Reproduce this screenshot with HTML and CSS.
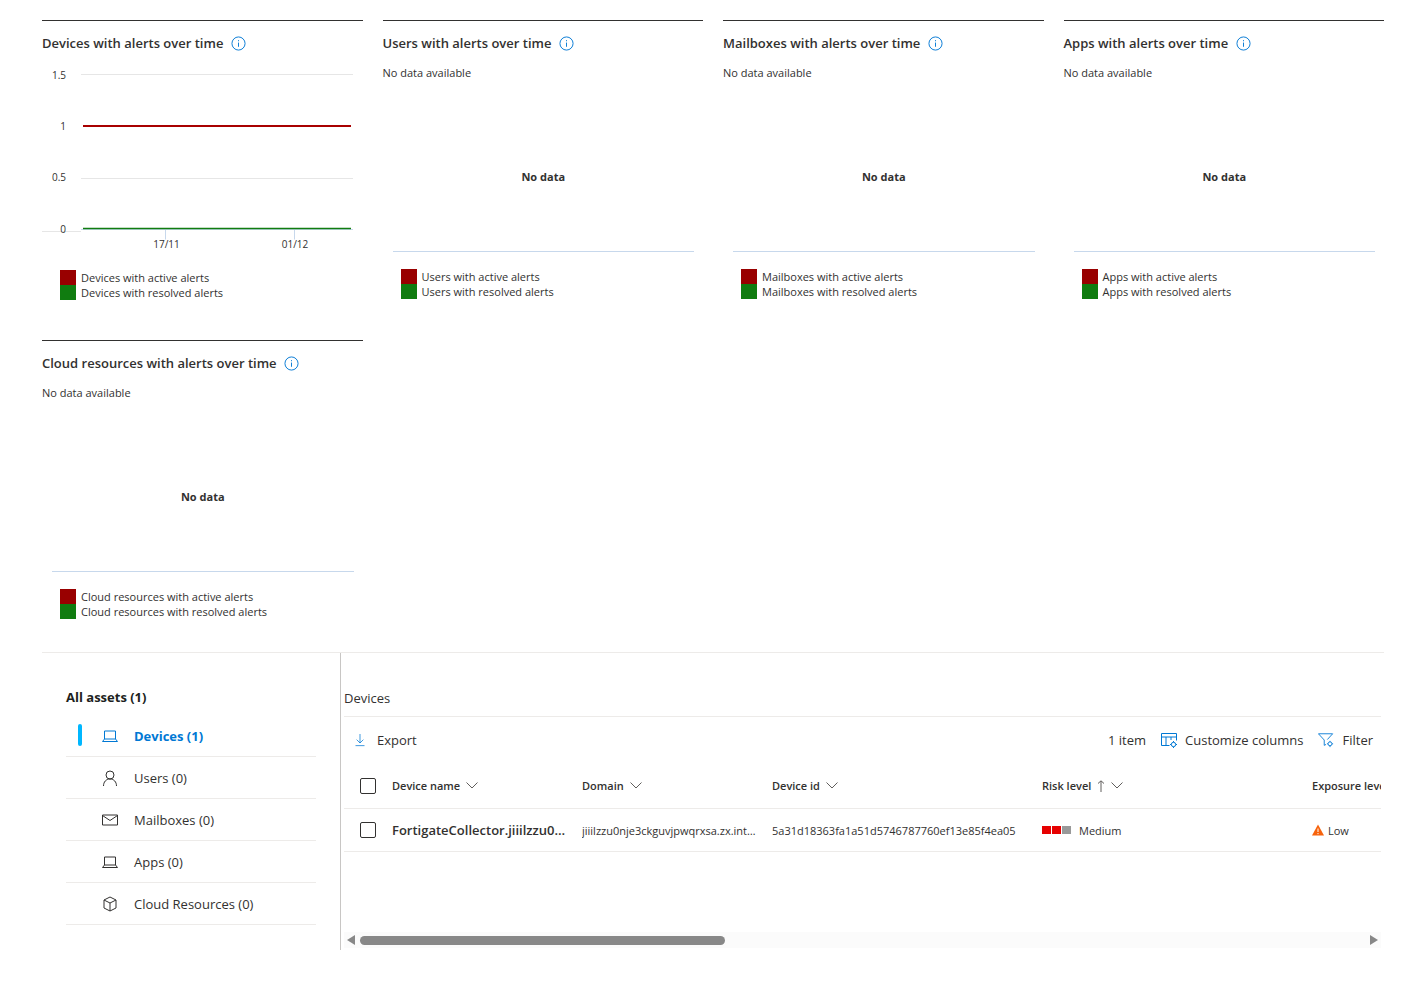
FILE: index.html
```html
<!DOCTYPE html>
<html lang="en">
<head>
<meta charset="utf-8">
<title>Assets</title>
<link rel="stylesheet" href="styles.css">
</head>
<body>
<main class="page">
  <section class="cards">
    <article class="card">
      <h3 class="card-title">Devices with alerts over time <svg class="info" viewBox="0 0 16 16"><circle cx="8" cy="8" r="7" /><path d="M8 7v4.5M8 4.4v1.2" /></svg></h3>
      <svg class="chart" viewBox="0 0 321 207" width="321" height="207">
        <g class="grid"><path d="M39 21.5h272M39 178.5-0 178.5" /><path d="M39 21.5h272M39 125.5h272" /></g>
        <path class="axis" d="M39 176.5h272M123.5 176.5v10M252.5 176.5v10" />
        <path class="line-red" d="M41 73h268" />
        <path class="line-green" d="M41 175.5h268" />
        <g class="ylabels"><text x="24" y="26">1.5</text><text x="24" y="77">1</text><text x="24" y="128">0.5</text><text x="24" y="180">0</text></g>
        <g class="xlabels"><text x="124.500" y="195">17/11</text><text x="253" y="195">01/12</text></g>
      </svg>
      <ul class="legend legend-chart">
        <li class="legend-item"><span class="swatch swatch-red"></span>Devices with active alerts</li>
        <li class="legend-item"><span class="swatch swatch-green"></span>Devices with resolved alerts</li>
      </ul>
    </article>
    <article class="card">
      <h3 class="card-title">Users with alerts over time <svg class="info" viewBox="0 0 16 16"><circle cx="8" cy="8" r="7" /><path d="M8 7v4.5M8 4.4v1.2" /></svg></h3>
      <p class="no-data-note">No data available</p>
      <div class="plot"><strong class="no-data">No data</strong></div>
      <ul class="legend">
        <li class="legend-item"><span class="swatch swatch-red"></span>Users with active alerts</li>
        <li class="legend-item"><span class="swatch swatch-green"></span>Users with resolved alerts</li>
      </ul>
    </article>
    <article class="card">
      <h3 class="card-title">Mailboxes with alerts over time <svg class="info" viewBox="0 0 16 16"><circle cx="8" cy="8" r="7" /><path d="M8 7v4.5M8 4.4v1.2" /></svg></h3>
      <p class="no-data-note">No data available</p>
      <div class="plot"><strong class="no-data">No data</strong></div>
      <ul class="legend">
        <li class="legend-item"><span class="swatch swatch-red"></span>Mailboxes with active alerts</li>
        <li class="legend-item"><span class="swatch swatch-green"></span>Mailboxes with resolved alerts</li>
      </ul>
    </article>
    <article class="card">
      <h3 class="card-title">Apps with alerts over time <svg class="info" viewBox="0 0 16 16"><circle cx="8" cy="8" r="7" /><path d="M8 7v4.5M8 4.4v1.2" /></svg></h3>
      <p class="no-data-note">No data available</p>
      <div class="plot"><strong class="no-data">No data</strong></div>
      <ul class="legend">
        <li class="legend-item"><span class="swatch swatch-red"></span>Apps with active alerts</li>
        <li class="legend-item"><span class="swatch swatch-green"></span>Apps with resolved alerts</li>
      </ul>
    </article>
    <article class="card">
      <h3 class="card-title">Cloud resources with alerts over time <svg class="info" viewBox="0 0 16 16"><circle cx="8" cy="8" r="7" /><path d="M8 7v4.5M8 4.4v1.2" /></svg></h3>
      <p class="no-data-note">No data available</p>
      <div class="plot"><strong class="no-data">No data</strong></div>
      <ul class="legend">
        <li class="legend-item"><span class="swatch swatch-red"></span>Cloud resources with active alerts</li>
        <li class="legend-item"><span class="swatch swatch-green"></span>Cloud resources with resolved alerts</li>
      </ul>
    </article>
  </section>

  <section class="assets">
    <nav class="side">
      <h4 class="side-title">All assets (1)</h4>
      <ul class="side-list">
        <li class="side-item is-active">
          <svg class="side-icon" viewBox="0 0 16 16"><path d="M2.500 3h11v8h-11zM.5 13.500h15" /><path d="M2.500 11L.5 13.500M13.500 11l2 2.500" /></svg>Devices (1)
        </li>
        <li class="side-item">
          <svg class="side-icon" viewBox="0 0 16 16"><circle cx="8" cy="5" r="4" /><path d="M1.500 16c0-4 2.500-7 6.500-7s6.500 3 6.500 7" /></svg>Users (0)
        </li>
        <li class="side-item">
          <svg class="side-icon" viewBox="0 0 16 16"><path d="M.5 3h15v10H.5zM.5 3.500L8 8.500l7.500-5" /></svg>Mailboxes (0)
        </li>
        <li class="side-item">
          <svg class="side-icon" viewBox="0 0 16 16"><path d="M2.500 3h11v8h-11zM.5 13.500h15" /><path d="M2.500 11L.5 13.500M13.500 11l2 2.500" /></svg>Apps (0)
        </li>
        <li class="side-item">
          <svg class="side-icon" viewBox="0 0 16 16"><path d="M8 1l6 3v8l-6 3-6-3V4zM2 4l6 3 6-3M8 7v8" /></svg>Cloud Resources (0)
        </li>
      </ul>
    </nav>

    <div class="table-panel">
      <h4 class="table-title">Devices</h4>
      <div class="toolbar">
        <span class="tool tool-export"><svg class="tool-icon" viewBox="0 0 16 16"><path d="M8 0v12M3.500 7.500L8 12l4.500-4.500M2 15.500h12" /></svg>Export</span>
        <span class="count">1 item</span>
        <span class="tool"><svg class="tool-icon" viewBox="0 0 16 16"><path d="M.5 1.500h15v7M.5 1.500v12h8M.5 5h15M5 5v8.500M10 5v3" /><circle cx="12.500" cy="12.500" r="2.200" /><path d="M12.500 9v1.200M12.500 14.800V16M9 12.500h1.200M14.800 12.500H16" /></svg>Customize columns</span>
        <span class="tool"><svg class="tool-icon" viewBox="0 0 18 16"><path d="M.5 1h16l-6 6.500M.5 1L7 8v6l2-1" /><circle cx="13.500" cy="12.300" r="2.200" /><path d="M13.500 9v1.100M13.500 14.500V16M10 12.300h1.200M15.800 12.300H17" /></svg>Filter</span>
      </div>
      <div class="table">
        <div class="row row-head">
          <span class="check"></span>
          <span class="col col-name">Device name <svg class="chev" viewBox="0 0 12 7"><path d="M.5.5L6 6l5.500-5.500" /></svg></span>
          <span class="col col-domain">Domain <svg class="chev" viewBox="0 0 12 7"><path d="M.5.5L6 6l5.500-5.500" /></svg></span>
          <span class="col col-id">Device id <svg class="chev" viewBox="0 0 12 7"><path d="M.5.5L6 6l5.500-5.500" /></svg></span>
          <span class="col col-risk">Risk level <svg class="sort" viewBox="0 0 8 12"><path d="M4 12V1M1 3.500L4 .8l3 2.700" /></svg> <svg class="chev" viewBox="0 0 12 7"><path d="M.5.5L6 6l5.500-5.500" /></svg></span>
          <span class="col col-exposure">Exposure level</span>
        </div>
        <div class="row row-body">
          <span class="check"></span>
          <span class="col col-name cell-name"><span class="ellipsis">FortigateCollector.jiiilzzu0nje3ckguvjpwqrxsa</span></span>
          <span class="col col-domain"><span class="ellipsis">jiiilzzu0nje3ckguvjpwqrxsa.zx.internal.cloudapp.net</span></span>
          <span class="col col-id">5a31d18363fa1a51d5746787760ef13e85f4ea05</span>
          <span class="col col-risk"><span class="risk"><i class="sq sq-on"></i><i class="sq sq-on"></i><i class="sq"></i></span>Medium</span>
          <span class="col col-exposure"><svg class="warn" viewBox="0 0 12 12"><path d="M6 .5L12 11.500H0z" /><path class="warn-mark" d="M6 4.500v3.500M6 9v1.200" /></svg>Low</span>
        </div>
      </div>
      <div class="scrollbar">
        <svg class="arrow" viewBox="0 0 8 10"><path d="M8 0v10L0 5z" /></svg>
        <span class="scroll-track"><span class="thumb"></span></span>
        <svg class="arrow" viewBox="0 0 8 10"><path d="M0 0v10l8-5z" /></svg>
      </div>
    </div>
  </section>
</main>
</body>
</html>
```

FILE: styles.css
```css
* { box-sizing: border-box; }
html, body { margin: 0; padding: 0; background: #fff; }
body {
  font-family: "Open Sans", "Noto Sans", sans-serif;
  color: #323130;
  font-size: 13px;
  overflow: hidden;
}
ul { list-style: none; margin: 0; padding: 0; }
h3, h4, p { margin: 0; }

.page { padding: 20px 35px 0 42px; height: 989px; }

.cards {
  display: grid;
  grid-template-columns: repeat(4, 1fr);
  grid-template-rows: 320px 312px;
  column-gap: 20px;
}
.card { border-top: 1px solid #323130; min-width: 0; }
.card-title {
  display: flex;
  align-items: center;
  height: 20px;
  margin-top: 12px;
  font-size: 13px;
  font-weight: 600;
  line-height: 20px;
  white-space: pre;
}
.info {
  width: 15px;
  height: 15px;
  margin-left: 4px;
  fill: none;
  stroke: #0078d4;
  stroke-width: 1;
}
.no-data-note {
  margin-top: 12px;
  height: 16px;
  font-size: 11px;
  line-height: 16px;
}
.plot {
  height: 171px;
  margin: 0 9px 0 10px;
  padding-top: 88px;
  border-bottom: 1px solid #c7d8ec;
  text-align: center;
}
.no-data { font-size: 11px; font-weight: 700; line-height: 16px; display: block; }
.legend { margin: 17px 0 0 18px; }
.legend-chart { margin-top: 10px; }
.legend-item {
  display: flex;
  align-items: center;
  height: 15px;
  font-size: 11px;
  line-height: 15px;
  white-space: nowrap;
}
.swatch { width: 16px; height: 15px; margin-right: 5px; flex: none; }
.swatch-red { background: #990000; }
.swatch-green { background: #107c10; }

.chart { display: block; }
.grid path { fill: none; stroke: #e6e6e6; stroke-width: 1; }
.axis { fill: none; stroke: #c7d8ec; stroke-width: 1; }
.line-red { stroke: #a80000; stroke-width: 2; fill: none; }
.line-green { stroke: #107c10; stroke-width: 1.5; fill: none; }
.ylabels text { font-size: 10px; fill: #323130; text-anchor: end; }
.xlabels text { font-size: 10px; fill: #323130; text-anchor: middle; }

.assets {
  display: flex;
  border-top: 1px solid #edebe9;
  height: 298px;
}
.side {
  width: 299px;
  flex: none;
  padding: 35px 24px 0 24px;
  border-right: 1px solid #c8c6c4;
}
.side-title { font-size: 13px; font-weight: 700; line-height: 18px; margin-bottom: 9px; color: #201f1e; }
.side-item {
  position: relative;
  display: flex;
  align-items: center;
  height: 42px;
  padding-left: 36px;
  border-bottom: 1px solid #edebe9;
  font-size: 13px;
}
.side-icon {
  width: 16px;
  height: 16px;
  margin-right: 16px;
  fill: none;
  stroke: #323130;
  stroke-width: 1;
}
.is-active { color: #0078d4; font-weight: 700; }
.is-active .side-icon { stroke: #0078d4; }
.is-active::before {
  content: "";
  position: absolute;
  left: 12px;
  top: 9px;
  width: 4px;
  height: 22px;
  border-radius: 2px;
  background: #00b7ff;
}

.table-panel { flex: 1; min-width: 0; padding: 0 3px 0 3px; }
.table-title {
  height: 64px;
  padding-top: 36px;
  border-bottom: 1px solid #edebe9;
  font-size: 13px;
  font-weight: 400;
  line-height: 18px;
}
.toolbar {
  display: flex;
  align-items: center;
  height: 46px;
  padding: 0 8px 0 10px;
  font-size: 13px;
}
.tool { display: inline-flex; align-items: center; }
.tool-export { margin-right: auto; }
.tool-icon {
  width: 16px;
  height: 16px;
  margin-right: 8px;
  fill: none;
  stroke: #0078d4;
  stroke-width: 1;
}
.tool-export .tool-icon { width: 12px; margin-right: 11px; }
.tool + .tool, .count + .tool { margin-left: 15px; }
.table { overflow: hidden; }
.row {
  display: flex;
  align-items: center;
  border-bottom: 1px solid #edebe9;
  padding-left: 16px;
  white-space: nowrap;
}
.row-head { height: 46px; font-size: 11px; font-weight: 600; }
.row-body { height: 43px; font-size: 11px; }
.check {
  width: 16px;
  height: 16px;
  flex: none;
  margin-right: 16px;
  border: 1px solid #323130;
  border-radius: 2px;
}
.col { flex: none; display: flex; align-items: center; }
.col-name { width: 190px; }
.col-domain { width: 190px; }
.col-id { width: 270px; }
.col-risk { width: 270px; }
.col-exposure { width: 120px; }
.ellipsis { overflow: hidden; text-overflow: ellipsis; display: block; }
.col-name .ellipsis { width: 176px; font-size: 13px; font-weight: 600; }
.col-domain .ellipsis { width: 178px; }
.chev { width: 12px; height: 7px; margin-left: 6px; fill: none; stroke: #605e5c; stroke-width: 1; }
.sort { width: 8px; height: 12px; margin-left: 6px; fill: none; stroke: #605e5c; stroke-width: 1; }
.risk { display: inline-flex; gap: 1px; margin-right: 8px; }
.sq { width: 9px; height: 8px; background: #999; display: block; }
.sq-on { background: #e60000; }
.warn { width: 12px; height: 12px; margin-right: 4px; }
.warn path { fill: #f7630c; }
.warn .warn-mark { fill: none; stroke: #fff; stroke-width: 1; }

.scrollbar {
  display: flex;
  align-items: center;
  height: 16px;
  margin-top: 80px;
  background: #fbfbfb;
  padding: 0 3px;
}
.arrow { width: 8px; height: 10px; fill: #888; flex: none; }
.scroll-track { flex: 1; margin: 0 5px; height: 9px; }
.thumb { display: block; width: 365px; height: 9px; border-radius: 5px; background: #888; }
```
